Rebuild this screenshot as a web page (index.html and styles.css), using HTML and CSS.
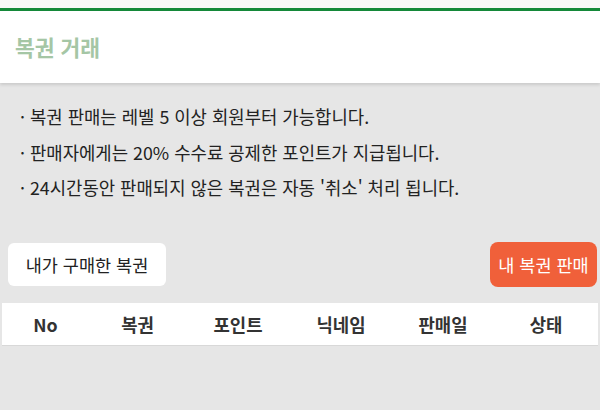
FILE: index.html
```html
<!DOCTYPE html>
<html lang="ko">
<head>
<meta charset="utf-8">
<link rel="stylesheet" href="styles.css">
</head>
<body>
<div class="topbar"></div>
<header class="header">
  <h1 class="title">복권 거래</h1>
</header>
<ul class="notes">
  <li>· 복권 판매는 레벨 5 이상 회원부터 가능합니다.</li>
  <li>· 판매자에게는 20% 수수료 공제한 포인트가 지급됩니다.</li>
  <li>· 24시간동안 판매되지 않은 복권은 자동 '취소' 처리 됩니다.</li>
</ul>
<div class="actions">
  <button class="btn btn-white">내가 구매한 복권</button>
  <button class="btn btn-orange">내 복권 판매</button>
</div>
<div class="table-head">
  <div class="col c1">No</div>
  <div class="col c2">복권</div>
  <div class="col c3">포인트</div>
  <div class="col c4">닉네임</div>
  <div class="col c5">판매일</div>
  <div class="col c6">상태</div>
</div>
</body>
</html>
```
FILE: styles.css
```css
html, body {
  margin: 0;
  padding: 0;
}
body {
  width: 600px;
  height: 410px;
  overflow: hidden;
  background: #e6e6e6;
  font-family: "Noto Sans CJK KR", "Noto Sans", sans-serif;
  color: #222;
}
.topbar {
  height: 8px;
  background: #f8f8f8;
  border-bottom: 3px solid #15893a;
}
.header {
  background: #fff;
  height: 72px;
  display: flex;
  align-items: center;
  padding-left: 15px;
  box-shadow: 0 2px 3px rgba(0,0,0,0.12);
  position: relative;
}
.title {
  margin: 0;
  font-size: 21.5px;
  font-weight: 700;
  color: #a5c6a5;
  line-height: 1;
}
.notes {
  list-style: none;
  margin: 16px 0 0 0;
  padding: 0 0 0 20px;
  font-size: 17.8px;
  line-height: 35.5px;
  color: #222;
}
.actions {
  display: flex;
  justify-content: space-between;
  align-items: center;
  padding: 0 3px 0 8px;
  margin-top: 36px;
}
.btn {
  border: none;
  font-family: inherit;
  font-size: 17.5px;
  border-radius: 6px;
  padding: 0;
  cursor: pointer;
}
.btn-white {
  background: #fff;
  color: #222;
  width: 158px;
  height: 43px;
}
.btn-orange {
  background: #f0603a;
  color: #fff;
  width: 107px;
  height: 45px;
  border-radius: 8px;
}
.table-head {
  margin: 16px 2px 0 2px;
  background: #fff;
  height: 42px;
  display: grid;
  grid-template-columns: 87px 97px 104px 102px 102px 104px;
  align-items: center;
  border-bottom: 1px solid #d8d8d8;
  font-weight: 700;
  font-size: 17.8px;
  color: #333;
}
.col {
  text-align: center;
}
```
